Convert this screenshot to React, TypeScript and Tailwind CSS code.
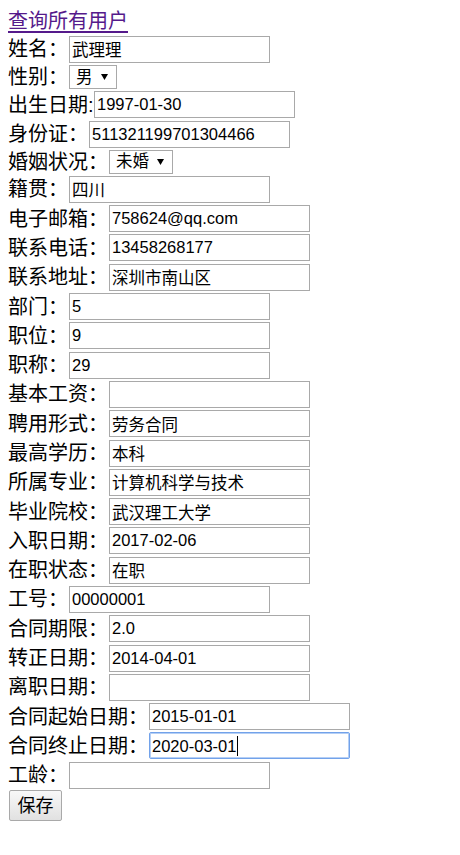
import React from 'react';

type Row =
  | { label: string; w: string; kind: 'input'; value: string; focused?: boolean }
  | { label: string; w: string; kind: 'select'; value: string };

const rows: Row[] = [
  { label: '姓名：', w: 'w-[61px]', kind: 'input', value: '武理理' },
  { label: '性别：', w: 'w-[61px]', kind: 'select', value: '男' },
  { label: '出生日期:', w: 'w-[86px]', kind: 'input', value: '1997-01-30' },
  { label: '身份证：', w: 'w-[81px]', kind: 'input', value: '511321199701304466' },
  { label: '婚姻状况：', w: 'w-[101px]', kind: 'select', value: '未婚' },
  { label: '籍贯：', w: 'w-[61px]', kind: 'input', value: '四川' },
  { label: '电子邮箱：', w: 'w-[101px]', kind: 'input', value: '758624@qq.com' },
  { label: '联系电话：', w: 'w-[101px]', kind: 'input', value: '13458268177' },
  { label: '联系地址：', w: 'w-[101px]', kind: 'input', value: '深圳市南山区' },
  { label: '部门：', w: 'w-[61px]', kind: 'input', value: '5' },
  { label: '职位：', w: 'w-[61px]', kind: 'input', value: '9' },
  { label: '职称：', w: 'w-[61px]', kind: 'input', value: '29' },
  { label: '基本工资：', w: 'w-[101px]', kind: 'input', value: '' },
  { label: '聘用形式：', w: 'w-[101px]', kind: 'input', value: '劳务合同' },
  { label: '最高学历：', w: 'w-[101px]', kind: 'input', value: '本科' },
  { label: '所属专业：', w: 'w-[101px]', kind: 'input', value: '计算机科学与技术' },
  { label: '毕业院校：', w: 'w-[101px]', kind: 'input', value: '武汉理工大学' },
  { label: '入职日期：', w: 'w-[101px]', kind: 'input', value: '2017-02-06' },
  { label: '在职状态：', w: 'w-[101px]', kind: 'input', value: '在职' },
  { label: '工号：', w: 'w-[61px]', kind: 'input', value: '00000001' },
  { label: '合同期限：', w: 'w-[101px]', kind: 'input', value: '2.0' },
  { label: '转正日期：', w: 'w-[101px]', kind: 'input', value: '2014-04-01' },
  { label: '离职日期：', w: 'w-[101px]', kind: 'input', value: '' },
  { label: '合同起始日期：', w: 'w-[141px]', kind: 'input', value: '2015-01-01' },
  { label: '合同终止日期：', w: 'w-[141px]', kind: 'input', value: '2020-03-01', focused: true },
  { label: '工龄：', w: 'w-[61px]', kind: 'input', value: '' },
];

const inputText = "text-[16.5px] text-black [font-family:'Liberation_Sans','Noto_Sans_CJK_SC',sans-serif]";

function Field({ row }: { row: Row }) {
  if (row.kind === 'select') {
    return (
      <div className={`flex h-[24px] items-center gap-2 border border-[#a9a9a9] bg-white pl-[6px] pr-2 ${inputText}`}>
        <span>{row.value}</span>
        <svg width="7" height="6" viewBox="0 0 7 6">
          <path d="M0 0 H7 L3.5 6 Z" fill="#000" />
        </svg>
      </div>
    );
  }
  if (row.focused) {
    // focused field with caret
    return (
      <div className={`flex h-[27px] w-[201px] items-center rounded-[2px] border border-[#72a2ea] bg-white px-[2px] shadow-[inset_0_0_0_1px_#b5cff5] ${inputText}`}>
        <span>{row.value}</span>
        <span className="ml-px h-[20px] w-px bg-black" />
      </div>
    );
  }
  return (
    <input
      readOnly
      defaultValue={row.value}
      className={`h-[27px] w-[201px] border border-[#a9a9a9] bg-white px-[2px] py-px outline-none ${inputText}`}
    />
  );
}

export default function App() {
  return (
    <div className="min-h-[855px] bg-white pl-2 pt-2 text-[20px] text-black [font-family:'Liberation_Sans','Noto_Sans_CJK_SC',sans-serif]">
      <div className="h-[26.8px] leading-[26.8px]">
        <a href="#" className="text-[#551a8b] underline underline-offset-[3px]">
          查询所有用户
        </a>
      </div>

      {rows.map((row) => (
        <div
          key={row.label}
          className={`flex items-center ${row.kind === 'select' ? 'h-[26px]' : 'h-[29.3px]'}`}
        >
          <span className={`${row.w} shrink-0 whitespace-nowrap leading-none`}>{row.label}</span>
          <Field row={row} />
        </div>
      ))}

      <button className="ml-px mt-0 h-[31px] w-[53px] rounded-[2px] border border-[#a9a9a9] bg-gradient-to-b from-[#f8f8f8] to-[#e1e1e1] text-[18px] leading-none text-black">
        保存
      </button>
    </div>
  );
}
